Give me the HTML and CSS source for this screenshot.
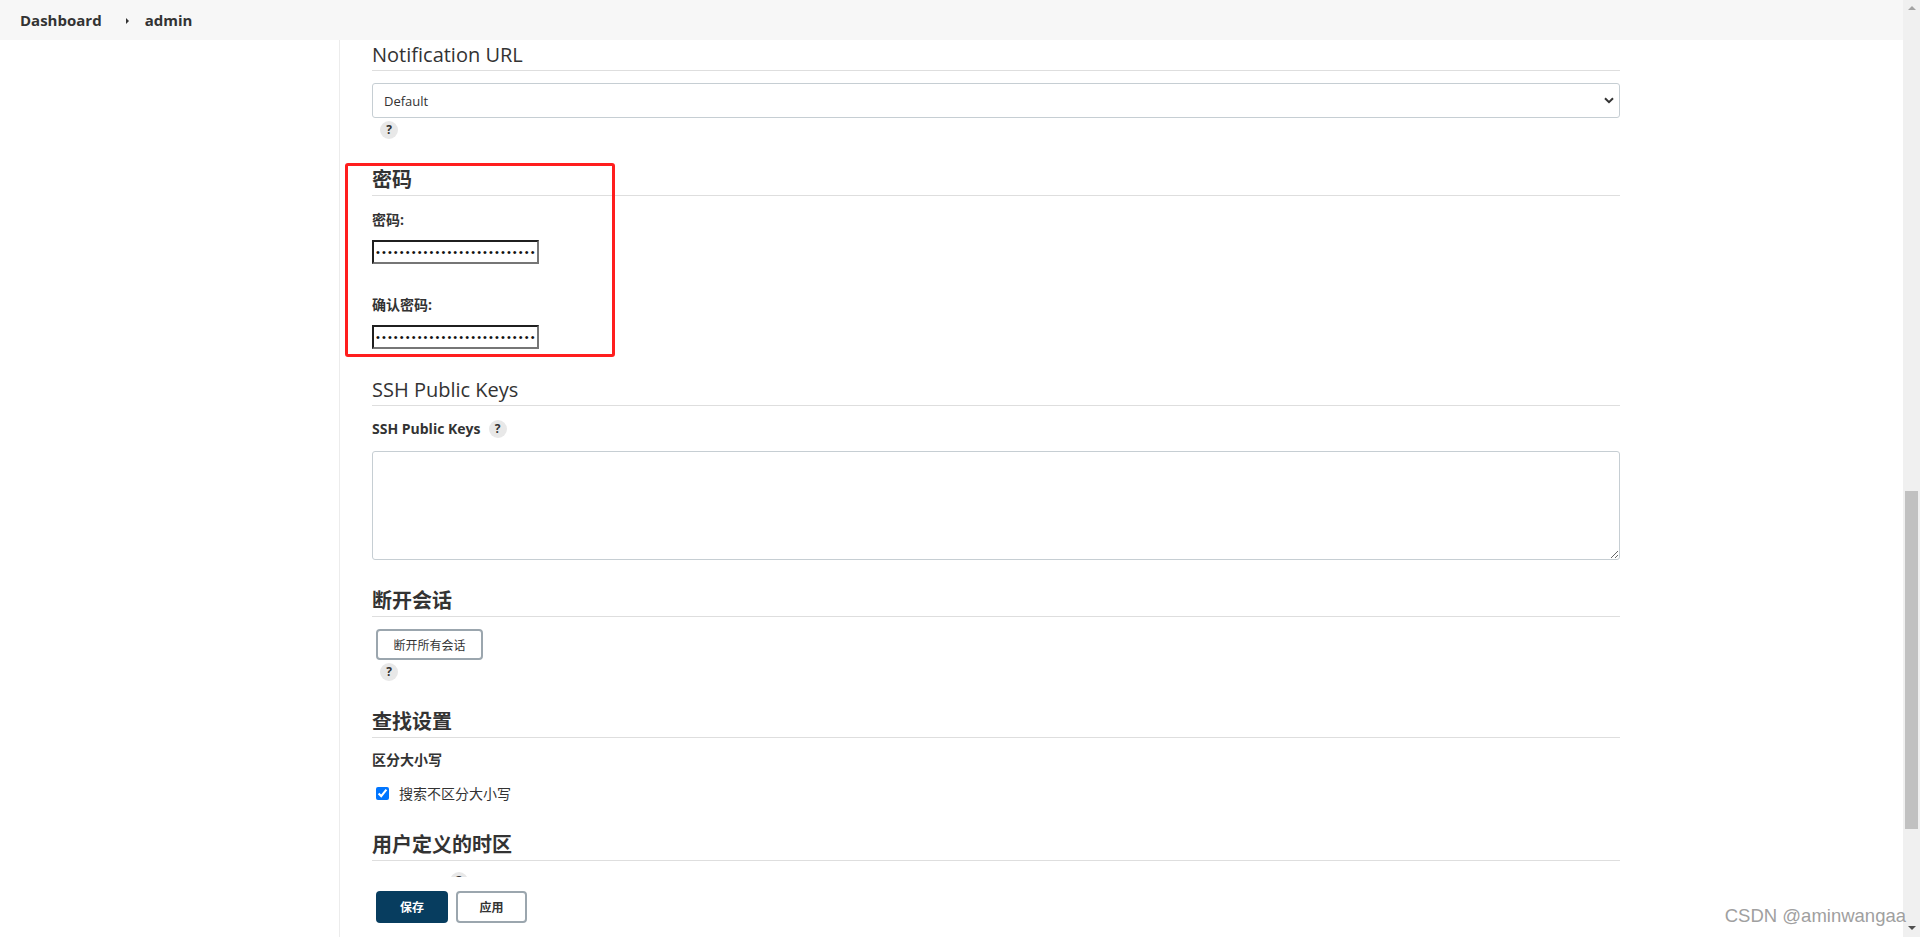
FILE: index.html
```html
<!DOCTYPE html>
<html lang="zh-CN">
<head>
<meta charset="utf-8">
<title>admin - Jenkins</title>
<link rel="stylesheet" href="styles.css">
</head>
<body>
<div class="window">
  <div class="app">
    <header class="topbar">
      <span class="crumb">Dashboard</span>
      <span class="crumb-sep"></span>
      <span class="crumb">admin</span>
    </header>
    <div class="page">
      <aside class="side"></aside>
      <main class="main">
        <div class="scroll">
          <section class="section">
            <h2 class="section-title first">Notification URL</h2>
            <div class="select-wrap">
              <select class="select"><option>Default</option></select>
              <svg class="chevron" width="10" height="7" viewBox="0 0 10 7"><path d="M1 1.2 L5 5.2 L9 1.2" fill="none" stroke="#333" stroke-width="2"/></svg>
            </div>
            <span class="help help-below">?</span>
          </section>

          <section class="section">
            <h2 class="section-title cjk">密码</h2>
            <div class="field-label pw-label-1">密码:</div>
            <input class="pw" type="password" value="passwordpasswordpassword1234">
            <div class="field-label pw-label-2">确认密码:</div>
            <input class="pw" type="password" value="passwordpasswordpassword1234">
          </section>

          <section class="section">
            <h2 class="section-title">SSH Public Keys</h2>
            <div class="field-label ssh-label"><span>SSH Public Keys</span><span class="help help-inline">?</span></div>
            <textarea class="keys"></textarea>
          </section>

          <section class="section">
            <h2 class="section-title cjk">断开会话</h2>
            <button class="btn btn-outline btn-sessions">断开所有会话</button>
            <span class="help help-below">?</span>
          </section>

          <section class="section">
            <h2 class="section-title cjk">查找设置</h2>
            <div class="field-label search-label">区分大小写</div>
            <label class="check-row"><input type="checkbox" checked><span>搜索不区分大小写</span></label>
          </section>

          <section class="section">
            <h2 class="section-title cjk tz-title">用户定义的时区</h2>
            <span class="help help-tz">?</span>
          </section>
        </div>
        <div class="bottom-bar">
          <button class="btn btn-primary">保存</button>
          <button class="btn btn-outline btn-apply">应用</button>
        </div>
      </main>
    </div>
  </div>
  <div class="scrollbar">
    <span class="sb-arrow sb-up"></span>
    <div class="sb-track"><div class="sb-thumb"></div></div>
    <span class="sb-arrow sb-down"></span>
  </div>
</div>
<div class="annot-box"></div>
<div class="watermark">CSDN @aminwangaa</div>
</body>
</html>
```

FILE: styles.css
```css
html, body {
  margin: 0;
  padding: 0;
  height: 100%;
  overflow: hidden;
}
body {
  font-family: "Open Sans", "Noto Sans CJK SC", sans-serif;
  color: #333;
  background: #fff;
}
.window {
  display: flex;
  height: 937px;
  overflow: hidden;
}
.app {
  flex: 1;
  display: flex;
  flex-direction: column;
  min-width: 0;
}
.topbar {
  height: 40px;
  flex-shrink: 0;
  background: #f7f7f7;
  display: flex;
  align-items: center;
  padding-left: 20px;
  font-size: 15px;
  font-weight: 700;
  color: #333;
}
.crumb-sep {
  width: 0;
  height: 0;
  border-left: 3px solid #333;
  border-top: 3px solid transparent;
  border-bottom: 3px solid transparent;
  margin: 1px 16px 0 24px;
}
.page {
  flex: 1;
  display: flex;
  min-height: 0;
}
.side {
  width: 339px;
  flex-shrink: 0;
  border-right: 1px solid #ececec;
}
.main {
  flex: 1;
  display: flex;
  flex-direction: column;
  padding-left: 32px;
  min-width: 0;
}
.scroll {
  flex: 1;
  overflow: hidden;
  width: 1248px;
}
.section {
  display: flex;
  flex-direction: column;
  align-items: flex-start;
}
.section-title {
  align-self: stretch;
  margin: 28px 0 0;
  font-size: 20px;
  line-height: 26px;
  font-weight: 400;
  padding-bottom: 2px;
  border-bottom: 1px solid #dedede;
  color: #333;
}
.section-title.first { margin-top: 2px; }
.section-title.cjk { font-weight: 700; }
.section-title.tz-title { margin-top: 29px; }

.select-wrap {
  position: relative;
  align-self: stretch;
  margin-top: 12px;
}
.select {
  appearance: none;
  -webkit-appearance: none;
  display: block;
  width: 100%;
  height: 35px;
  box-sizing: border-box;
  border: 1px solid #c6ced3;
  border-radius: 3px;
  background: #fff;
  font-family: "Open Sans", sans-serif;
  font-size: 13px;
  color: #333;
  padding: 0 11px;
}
.chevron {
  position: absolute;
  right: 6px;
  top: 14px;
}
.help {
  display: inline-flex;
  align-items: center;
  justify-content: center;
  width: 18px;
  height: 18px;
  border-radius: 50%;
  background: #e8e8e8;
  color: #333;
  font-size: 12px;
  font-weight: 700;
  line-height: 1;
}
.help-below {
  margin: 3px 0 0 8px;
}
.help-inline {
  margin-left: 8px;
}
.help-tz {
  margin: 11px 0 0 78px;
}
.field-label {
  font-size: 14px;
  font-weight: 700;
  line-height: 20px;
  color: #333;
}
.pw-label-1 { margin-top: 14px; }
.pw-label-2 { margin-top: 31px; }
.ssh-label {
  margin-top: 13px;
  display: flex;
  align-items: center;
  height: 20px;
}
.search-label { margin-top: 12px; }

.pw {
  margin-top: 10px;
  width: 167px;
  height: 24px;
  box-sizing: border-box;
  border-style: solid;
  border-width: 2px;
  border-color: #1f1f1f #767676 #767676 #1f1f1f;
  padding: 0 2px;
  font-family: "Liberation Sans", sans-serif;
  font-size: 11px;
  letter-spacing: 2.1px;
  color: #111;
  background: #fff;
  outline: none;
}
.keys {
  margin-top: 12px;
  align-self: stretch;
  height: 109px;
  box-sizing: border-box;
  border: 1px solid #c6ced3;
  border-radius: 3px;
  resize: vertical;
  font-family: "Liberation Mono", monospace;
}
.btn {
  box-sizing: border-box;
  height: 32px;
  border-radius: 4px;
  font-family: "Open Sans", "Noto Sans CJK SC", sans-serif;
  font-size: 12px;
  cursor: pointer;
  padding: 0;
}
.btn-outline {
  background: #fff;
  border: 2px solid #9ba6ae;
  color: #333;
}
.btn-sessions {
  margin: 12px 0 0 4px;
  width: 107px;
  height: 31px;
  font-weight: 400;
}
.check-row {
  margin: 13px 0 0 4px;
  display: flex;
  align-items: center;
  height: 20px;
  font-size: 14px;
  color: #333;
}
.check-row input {
  margin: 0 10px 0 0;
  width: 13px;
  height: 13px;
  accent-color: #0075ff;
}
.bottom-bar {
  height: 60px;
  flex-shrink: 0;
  display: flex;
  align-items: center;
  gap: 8px;
  padding-left: 4px;
  background: #fff;
}
.btn-primary {
  width: 72px;
  background: #073d5f;
  border: none;
  color: #fff;
  font-weight: 700;
}
.btn-apply {
  width: 71px;
  font-weight: 700;
}
.scrollbar {
  width: 17px;
  flex-shrink: 0;
  background: #f0f0f0;
  display: flex;
  flex-direction: column;
  align-items: center;
}
.sb-track {
  flex: 1;
  align-self: stretch;
  display: flex;
  flex-direction: column;
  padding-top: 478px;
}
.sb-thumb {
  margin-left: 2px;
  width: 13px;
  height: 338px;
  background: #c1c1c1;
}
.sb-arrow {
  width: 0;
  height: 0;
  border-left: 4px solid transparent;
  border-right: 4px solid transparent;
}
.sb-up {
  margin: 6px 0 3px;
  border-bottom: 4px solid #a3a3a3;
}
.sb-down {
  margin: 3px 0 7px;
  border-top: 4px solid #505050;
}
.annot-box {
  position: absolute;
  left: 345px;
  top: 163px;
  width: 270px;
  height: 194px;
  box-sizing: border-box;
  border: 3px solid #ff1e1e;
  border-radius: 3px;
  pointer-events: none;
}
.watermark {
  position: absolute;
  right: 14px;
  bottom: 10px;
  font-family: "Liberation Sans", sans-serif;
  font-size: 18.5px;
  color: #a0a0a0;
  text-shadow: 0 0 1px #fff, 0 0 1px #fff;
  pointer-events: none;
}
```
